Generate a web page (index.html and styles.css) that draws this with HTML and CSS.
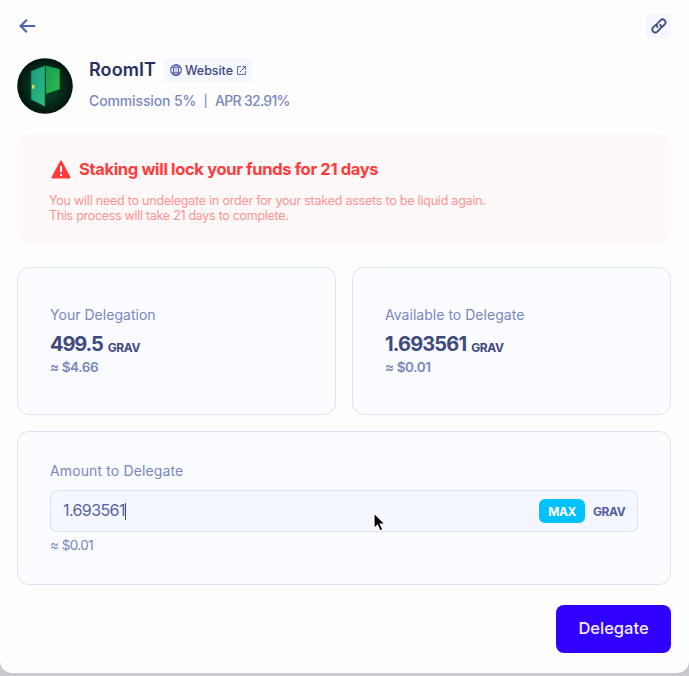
FILE: index.html
```
<!DOCTYPE html>
<html lang="en">
<head>
<meta charset="utf-8">
<title>Delegate</title>
<link rel="stylesheet" href="styles.css">
</head>
<body>
<main class="modal">
  <header class="topbar">
    <svg class="back" width="18" height="16" viewBox="0 0 18 16"><path d="M16.200 8H1.500M7.900 1.700 1.600 8l6.300 6.300" fill="none" stroke="#4c62b4" stroke-width="2.2"/></svg>
    <div class="link-button">
      <svg width="16" height="16" viewBox="0 0 18 18"><g fill="none" stroke="#414b82" stroke-width="2" stroke-linecap="round"><path d="M7.4 10.3a3.3 3.3 0 0 1 .2-4.5l3.1-3.2a3.25 3.25 0 0 1 4.7 4.6l-2.7 2.8"/><path d="M10.4 7.5a3.3 3.3 0 0 1-.2 4.6l-3.1 3.1a3.25 3.25 0 0 1-4.6-4.6l2.6-2.7"/></g></svg>
    </div>
  </header>
  <section class="validator">
    <svg class="avatar" width="56" height="56" viewBox="0 0 56 56">
      <defs>
        <radialGradient id="disc"><stop offset="0" stop-color="#10552f"/><stop offset=".65" stop-color="#062b18"/><stop offset="1" stop-color="#03150c"/></radialGradient>
        <linearGradient id="door" x2="1" y2="1"><stop stop-color="#189b80"/><stop offset="1" stop-color="#2fbd7c"/></linearGradient>
        <linearGradient id="frame" x2="1" y2="1"><stop stop-color="#179a50"/><stop offset="1" stop-color="#2cbd50"/></linearGradient>
      </defs>
      <circle cx="28" cy="28" r="27.8" fill="url(#disc)"/>
      <path d="M28.2 7.2 43 11v20.5l-14.800 5z" fill="url(#frame)" stroke="#06331c" stroke-width=".7"/>
      <path d="M13.800 13 28.200 7.200V49L13.800 41.500z" fill="url(#door)" stroke="#06331c" stroke-width=".7"/>
      <rect x="15" y="26.700" width="2.400" height="4" rx="1" fill="#d6e34b"/>
    </svg>
    <div class="identity">
      <div class="name-row">
        <h1 class="name">RoomIT</h1>
        <a class="website">
          <svg width="12" height="12" viewBox="0 0 12 12"><g fill="none" stroke="#4651a0" stroke-width="1.100"><circle cx="6" cy="6" r="5.300"/><ellipse cx="6" cy="6" rx="2.500" ry="5.300"/><path d="M6 .7v10.600M1.300 3.500h9.400M1.300 8.500h9.400" stroke-width=".6"/></g></svg>
          <span class="website-label">Website</span>
          <svg class="external" width="9" height="9" viewBox="0 0 9 9"><path d="M4 .6H.6v7.800h7.800V5M5.300.6h3.100v3.100M8.300.7 3 6" fill="none" stroke="#5b6597"/></svg>
        </a>
      </div>
      <div class="rates"><span class="commission">Commission 5%</span><span class="bar">|</span><span class="apr">APR 32.91%</span></div>
    </div>
  </section>
  <section class="warning">
    <div class="warning-head">
      <svg width="20" height="19" viewBox="0 0 20 19"><path d="M10 1.500 18.500 17.500H1.500z" fill="#ff3b3c" stroke="#ff3b3c" stroke-width="2" stroke-linejoin="round"/><path d="M10 6v6.200M10 14v2" stroke="#fff4f4" stroke-width="2"/></svg>
      <h2 class="warning-title">Staking will lock your funds for 21 days</h2>
    </div>
    <p class="warning-text"><span class="line-one">You will need to undelegate in order for your staked assets to be liquid again.</span><br><span class="line-two">This process will take 21 days to complete.</span></p>
  </section>
  <section class="balances">
    <div class="card balance">
      <div class="label">Your Delegation</div>
      <div class="amount"><span class="value value-own">499.5</span><span class="unit">GRAV</span></div>
      <div class="fiat">≈ $4.66</div>
    </div>
    <div class="card balance">
      <div class="label">Available to Delegate</div>
      <div class="amount"><span class="value value-available">1.693561</span><span class="unit">GRAV</span></div>
      <div class="fiat">≈ $0.01</div>
    </div>
  </section>
  <section class="card entry">
    <div class="label label-entry">Amount to Delegate</div>
    <div class="field">
      <span class="typed">1.693561</span><span class="caret"></span>
      <span class="max">MAX</span>
      <span class="unit field-unit">GRAV</span>
    </div>
    <div class="fiat fiat-entry">≈ $0.01</div>
  </section>
  <footer class="actions"><button class="delegate">Delegate</button></footer>
</main>
<svg class="pointer" width="14" height="21" viewBox="0 0 14 21"><path d="M1 1v15.500l3.500-3.300 2.600 5.800 2.800-1.200-2.600-5.600h4.800z" fill="#000" stroke="#fff" stroke-width="1.200"/></svg>
</body>
</html>
```
FILE: styles.css
```
* { box-sizing: border-box; }
body { margin: 0; height: 676px; overflow: hidden; background: #c8cacf; font-family: Inter, "Liberation Sans", sans-serif; color: #3f4a7e; }
h1, h2, p { margin: 0; }
svg { display: block; flex: none; }
span { white-space: nowrap; }
.modal { height: 673px; padding: 14px 18px 0 17px; background: #fefefe; border-radius: 0 0 12px 12px; }
.topbar { display: flex; justify-content: space-between; height: 24px; }
.back { margin: 4px 0 0 2px; }
.link-button { display: grid; place-items: center; width: 25px; height: 24px; border-radius: 3px; background: #f4f7ff; }
.validator { display: flex; gap: 16px; margin-top: 20px; height: 56px; }
.name-row { display: flex; gap: 9px; height: 24px; }
.name { width: 66px; font-size: 18px; line-height: 24px; font-weight: 600; letter-spacing: 0.1px; color: #27315f; white-space: nowrap; }
.website { display: flex; align-items: center; width: 88px; height: 24px; padding-left: 6px; border-radius: 3px; background: #f4f7ff; }
.website-label { width: 47px; margin: 0 5px 0 3px; font-size: 12.5px; font-weight: 500; letter-spacing: -0.05px; }
.rates { display: flex; margin-top: 10px; height: 18px; font-size: 14px; line-height: 18px; font-weight: 500; color: #7887bd; }
.commission { width: 107px; letter-spacing: -0.12px; }
.bar { width: 19px; text-align: center; font-size: 12px; }
.apr { letter-spacing: -0.7px; }
.warning { height: 112px; margin-top: 20px; padding: 25px 32px; border-radius: 14px; background: #fff8f8; }
.warning-head { display: flex; align-items: center; gap: 8px; height: 20px; padding-left: 2px; }
.warning-title { font-size: 16.5px; line-height: 20px; font-weight: 700; letter-spacing: -0.34px; color: #ff3b3c; white-space: nowrap; }
.warning-text { margin-top: 14px; font-size: 12.5px; line-height: 15px; color: #ff9494; }
.line-one { letter-spacing: -0.22px; }
.line-two { letter-spacing: -0.29px; }
.balances { display: grid; grid-template-columns: 1fr 1fr; gap: 16px; margin-top: 21px; }
.card { border: 1px solid #dbe1f6; border-radius: 12px; background: #fbfcff; }
.balance { height: 148px; padding: 38px 32px; }
.label { height: 18px; font-size: 14px; line-height: 18px; letter-spacing: 0.03px; color: #7887bd; white-space: nowrap; }
.label-entry { letter-spacing: 0.13px; }
.amount { display: flex; align-items: baseline; gap: 5px; height: 26px; margin-top: 7px; line-height: 26px; }
.value { font-size: 20px; font-weight: 700; }
.value-own { letter-spacing: -1.1px; }
.value-available { letter-spacing: -0.85px; }
.unit { position: relative; top: 1px; font-size: 12px; font-weight: 700; letter-spacing: -0.4px; }
.fiat { height: 18px; margin-top: 1px; font-size: 13.5px; line-height: 18px; font-weight: 600; letter-spacing: -0.4px; color: #7887bd; }
.entry { height: 154px; margin-top: 16px; padding: 30px 32px; }
.field { display: flex; align-items: center; height: 42px; margin-top: 10px; padding: 0 12px; border: 1px solid #dbe1f6; border-radius: 6px; background: #f4f7ff; }
.typed { width: 62px; padding-bottom: 2px; font-size: 16px; letter-spacing: -0.6px; color: #5763a0; }
.caret { width: 1px; height: 17px; background: #414b82; }
.max { display: grid; place-items: center; width: 46px; height: 24px; margin-left: auto; border-radius: 6px; background: #00c2fa; color: #fff; font-size: 12px; font-weight: 700; letter-spacing: -0.45px; }
.field-unit { top: 0; width: 32px; margin-left: 8px; color: #5360a0; }
.fiat-entry { margin-top: 4px; font-weight: 400; letter-spacing: -0.55px; }
.actions { display: flex; justify-content: flex-end; margin-top: 20px; }
.delegate { width: 115px; height: 48px; padding: 0 0 2px; border: 0; border-radius: 8px; background: #3200ff; color: #f3efff; font: 500 16.5px/46px Inter, sans-serif; }
.pointer { position: absolute; left: 373px; top: 512px; }
```
